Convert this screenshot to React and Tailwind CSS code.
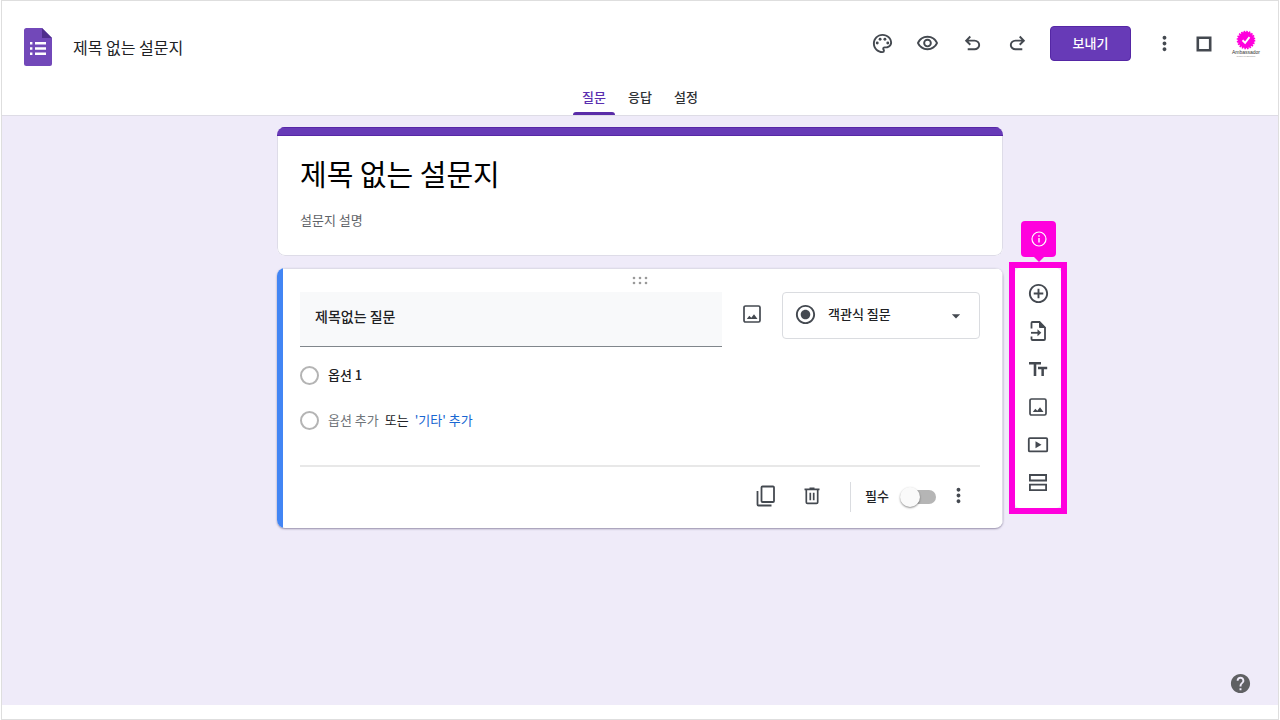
import {
  MdAddCircleOutline,
  MdArrowDropDown,
  MdHelp,
  MdMoreVert,
  MdOutlinePalette,
  MdOutlineVisibility,
  MdRadioButtonChecked,
} from 'react-icons/md';

const UNDO_PATH =
  'M7 19v-2h7.1q1.575 0 2.738-1T18 13.5 16.838 11 14.1 10H7.8l2.6 2.6L9 14 4 9l5-5 1.4 1.4L7.8 8h6.3q2.425 0 4.163 1.575T20 13.5t-1.737 3.925T14.1 19z';

function FormsLogo() {
  return (
    <svg width="28" height="39" viewBox="0 0 28 39" aria-hidden="true">
      <path d="M2.5 0H18l10 10v26a2 2 0 0 1-2 2H2.5A2.5 2.5 0 0 1 0 35.5v-33A2.5 2.5 0 0 1 2.5 0z" fill="#7248b9" />
      <path d="M18 0l10 10H18z" fill="#4f2d8c" />
      <path d="M11 14h11v2.4H11zM11 19.3h11v2.4H11zM11 24.6h11V27H11z" fill="#fff" />
      <path d="M6 14h2.4v2.4H6zM6 19.3h2.4v2.4H6zM6 24.6h2.4V27H6z" fill="#fff" />
    </svg>
  );
}

function UndoIcon({ className = '' }) {
  return (
    <svg width="23" height="23" viewBox="0 0 24 24" fill="currentColor" className={className} aria-hidden="true">
      <path d={UNDO_PATH} />
    </svg>
  );
}

function FrameIcon() {
  return (
    <svg width="16" height="16" viewBox="0 0 16 16" fill="none" stroke="currentColor" strokeWidth="2.6" aria-hidden="true">
      <path d="M1.8 1.8h12.4v12.4H1.8z" />
    </svg>
  );
}

function ImageIcon() {
  return (
    <svg width="20" height="20" viewBox="0 0 20 20" fill="none" aria-hidden="true">
      <rect x="2" y="2" width="16" height="16" rx="1.5" stroke="currentColor" strokeWidth="1.7" />
      <path d="M4.8 15l2.5-3.2 2 2 2.700-3.600 3.500 4.800z" fill="currentColor" />
    </svg>
  );
}

function CopyIcon() {
  return (
    <svg width="22" height="22" viewBox="0 0 22 22" fill="none" stroke="currentColor" strokeWidth="1.8" aria-hidden="true">
      <rect x="6.5" y="1.500" width="12.5" height="15.5" rx="1" />
      <path d="M2.5 6v13.5q0 1 1 1h13" />
    </svg>
  );
}

function TrashIcon() {
  return (
    <svg width="20" height="20" viewBox="0 0 20 20" fill="none" stroke="currentColor" strokeWidth="1.7" aria-hidden="true">
      <path d="M2.5 3.4h15M7.5 2.4h5M4.3 3.6v12.6q0 1.200 1.200 1.200h9q1.200 0 1.200-1.200V3.600M8.300 6.800v7.400M11.700 6.800v7.400" />
    </svg>
  );
}

function ImportIcon() {
  return (
    <svg width="22" height="22" viewBox="0 0 22 22" fill="none" stroke="currentColor" strokeWidth="1.8" aria-hidden="true">
      <path d="M4.5 8.5V3q0-1 1-1h7L18 7.5V19q0 1-1 1H5.5q-1 0-1-1v-2.5" />
      <path d="M12.5 2v5.5H18z" fill="currentColor" strokeWidth="1" />
      <path d="M4 12.8h8" />
      <path d="M10.500 9.300l3.800 3.500-3.800 3.500z" fill="currentColor" stroke="none" />
    </svg>
  );
}

function TextIcon() {
  return (
    <svg width="22" height="20" viewBox="0 0 22 20" fill="currentColor" aria-hidden="true">
      <path d="M2 3h12v2.6H9.3V17H6.7V5.600H2zM11 7.800h9.200v2.500h-3.300V17h-2.500v-6.700H11z" />
    </svg>
  );
}

function VideoIcon() {
  return (
    <svg width="22" height="18" viewBox="0 0 22 18" fill="none" aria-hidden="true">
      <rect x="1.8" y="2.2" width="18.4" height="13.2" rx="1" stroke="currentColor" strokeWidth="1.8" />
      <path d="M8.5 5.300l6 3.500-6 3.500z" fill="currentColor" />
    </svg>
  );
}

function SectionIcon() {
  return (
    <svg width="20" height="20" viewBox="0 0 20 20" fill="none" stroke="currentColor" strokeWidth="1.8" aria-hidden="true">
      <path d="M1.9 2h16.2v5.5H1.9zM1.9 11.7h16.2v5.5H1.9z" />
    </svg>
  );
}

function InfoIcon() {
  return (
    <svg width="16" height="16" viewBox="0 0 16 16" fill="none" stroke="#fff" strokeWidth="1.200" aria-hidden="true">
      <circle cx="8" cy="8" r="7" />
      <path d="M8 7v4.500M8 4.200v1.500" strokeWidth="1.400" />
    </svg>
  );
}

function AvatarBadge() {
  return (
    <svg width="20" height="20" viewBox="0 0 20 20" aria-hidden="true">
      <circle cx="10" cy="10" r="8.3" fill="#ff00dd" />
      <circle cx="10" cy="10" r="8.5" fill="none" stroke="#ff00dd" strokeWidth="1.6" strokeDasharray="1.6 1.07" />
      <path d="M6.5 10.3l2.6 2.5 4.4-5.6" fill="none" stroke="#fff" strokeWidth="1.9" />
    </svg>
  );
}

function IconButton({ label, children }) {
  return (
    <button type="button" aria-label={label} className="flex h-6 w-6 shrink-0 items-center justify-center text-[#444950]">
      {children}
    </button>
  );
}

const tabs = ['질문', '응답', '설정'];

const tools = [
  { label: '질문 추가', icon: <MdAddCircleOutline size={23} /> },
  { label: '질문 가져오기', icon: <ImportIcon /> },
  { label: '제목 및 설명 추가', icon: <TextIcon /> },
  { label: '이미지 추가', icon: <ImageIcon /> },
  { label: '동영상 추가', icon: <VideoIcon /> },
  { label: '섹션 추가', icon: <SectionIcon /> },
];

function Header() {
  return (
    <header className="border-b border-[#dedce6] bg-white">
      <div className="flex h-20 items-start justify-between pt-[25px] pr-[18px] pl-[22px]">
        <div className="flex h-[43px] items-center gap-[21px]">
          <FormsLogo />
          <h1 className="pb-[2px] text-base text-[#202124]">제목 없는 설문지</h1>
        </div>

        <div className="flex h-[35px] items-center gap-[21px]">
          <IconButton label="테마 맞춤설정"><MdOutlinePalette size={23} /></IconButton>
          <IconButton label="미리보기"><MdOutlineVisibility size={23} /></IconButton>
          <IconButton label="실행취소"><UndoIcon /></IconButton>
          <IconButton label="다시 실행"><UndoIcon className="-scale-x-100" /></IconButton>
          <button type="button" className="h-[35px] w-[81px] rounded-[4px] border border-[#5527a5] bg-[#673ab7] pb-[2px] text-[13px] font-medium text-white">
            보내기
          </button>
          <div className="flex items-center gap-4">
            <IconButton label="더보기"><MdMoreVert size={23} /></IconButton>
            <IconButton label="앱"><FrameIcon /></IconButton>
            <button type="button" className="flex w-7 flex-col items-center whitespace-nowrap">
              <AvatarBadge />
              <span className="font-['Liberation_Sans',sans-serif] text-[5px] leading-[5px] text-[#333]">Ambassador</span>
              <span className="font-['Liberation_Sans',sans-serif] text-[2px] leading-[3px] text-[#888]">Google for Education</span>
            </button>
          </div>
        </div>
      </div>

      <nav className="flex justify-center gap-1">
        {tabs.map((tab, i) => (
          <a
            key={tab}
            href="#"
            className={`relative flex h-[34px] w-[42px] items-center justify-center pb-[2px] text-[13px] font-medium ${i === 0 ? 'text-[#5b2fb0]' : 'text-[#2d3034]'}`}
          >
            {tab}
            {i === 0 && <span className="absolute inset-x-0 bottom-0 h-[3px] rounded-t-[3px] bg-[#5a2ca8]" />}
          </a>
        ))}
      </nav>
    </header>
  );
}

function TitleCard() {
  return (
    <section className="overflow-hidden rounded-lg bg-white">
      <div className="h-[9px] border-y border-[#5727a6] bg-[#673ab7]" />
      <div className="rounded-b-lg border-x border-b border-[#dedce8] px-[22px] pt-[18px] pb-[26px]">
        <input aria-label="설문지 제목" defaultValue="제목 없는 설문지" className="block h-10 w-full text-[29px] text-black outline-none" />
        <input aria-label="설문지 설명" placeholder="설문지 설명" className="mt-[15px] block h-5 w-full text-[13px] outline-none placeholder:text-[#5f6368]" />
      </div>
    </section>
  );
}

function DragDots() {
  return (
    <svg width="16" height="9" viewBox="0 0 16 9" fill="#9a9a9a" aria-hidden="true">
      <circle cx="2" cy="2" r="1.3" />
      <circle cx="8" cy="2" r="1.3" />
      <circle cx="14" cy="2" r="1.3" />
      <circle cx="2" cy="7" r="1.3" />
      <circle cx="8" cy="7" r="1.3" />
      <circle cx="14" cy="7" r="1.3" />
    </svg>
  );
}

const radioClass = 'h-[19px] w-[19px] appearance-none rounded-full border-2 border-[#b4b4b4] bg-white';

function QuestionCard() {
  return (
    <section className="flex overflow-hidden rounded-lg bg-white shadow-[0_1px_2px_rgba(60,50,90,0.5)]">
      <div className="w-[6px] shrink-0 bg-[#4285f4]" />
      <div className="min-w-0 flex-1 border-t border-r border-[#dedce8] pr-[22px] pl-[17px]">
        <div className="flex h-[23px] items-center justify-center">
          <DragDots />
        </div>

        <div className="flex items-start gap-[18px]">
          <input
            aria-label="질문"
            defaultValue="제목없는 질문"
            className="h-[55px] min-w-0 flex-1 border-b border-[#80868b] bg-[#f8f9fa] px-[15px] pb-[6px] text-[14px] font-medium text-[#202124] outline-none"
          />
          <div className="flex h-11 items-center">
            <IconButton label="이미지 추가"><ImageIcon /></IconButton>
          </div>
          <div className="relative flex h-[47px] w-[198px] items-center text-[#444950]">
            <select aria-label="질문 유형" className="h-full w-full appearance-none rounded-[4px] border border-[#dadce0] bg-white pb-[3px] pl-[45px] text-[13px] font-medium text-[#202124] outline-none">
              <option>객관식 질문</option>
            </select>
            <MdRadioButtonChecked size={23} className="pointer-events-none absolute top-[11px] left-3" />
            <MdArrowDropDown size={20} className="pointer-events-none absolute right-[14px]" />
          </div>
        </div>

        <div className="mt-[6px] text-[13px] text-[#202124]">
          <div className="flex h-[45px] items-center gap-[9px]">
            <input type="radio" name="option" id="option-1" className={radioClass} />
            <label htmlFor="option-1" className="pb-[2px] font-medium">옵션 1</label>
          </div>
          <div className="flex h-[45px] items-center gap-[9px]">
            <input type="radio" name="option" id="option-new" className={radioClass} />
            <div className="flex gap-[6px] pb-[2px]">
              <label htmlFor="option-new" className="text-[#70757a]">옵션 추가</label>
              <span>또는</span>
              <button type="button" className="text-[#1967d2]">'기타' 추가</button>
            </div>
          </div>
        </div>

        <div className="mt-[22px] flex h-[63px] items-center justify-end border-t-2 border-[#e8e8e8] pr-[10px] pb-px">
          <div className="flex items-center gap-[22px] pb-[3px]">
            <IconButton label="복사"><CopyIcon /></IconButton>
            <IconButton label="삭제"><TrashIcon /></IconButton>
          </div>
          <div className="ml-[26px] flex h-[30px] items-center border-l border-[#dadce0] pl-[14px]">
            <label htmlFor="required" className="pb-[2px] text-[13px] font-medium text-[#202124]">필수</label>
            <input
              id="required"
              type="checkbox"
              role="switch"
              className="relative mr-[10px] ml-[13px] h-[14px] w-[34px] appearance-none rounded-full bg-[#b5b5b5] before:absolute before:-top-[3px] before:-left-[2px] before:h-5 before:w-5 before:rounded-full before:bg-[#fafafa] before:shadow-[0_1px_2px_rgba(0,0,0,0.45)]"
            />
            <div className="pb-[3px]">
              <IconButton label="더보기"><MdMoreVert size={23} /></IconButton>
            </div>
          </div>
        </div>
      </div>
    </section>
  );
}

function Toolbar() {
  return (
    <aside className="relative mt-[135px] ml-[6px] w-[58px] self-start border-6 border-[#ff00dd] bg-[#efebf9]">
      {/* callout */}
      <div className="absolute -top-[47px] left-[6px] flex h-9 w-[35px] items-center justify-center rounded-[4px] bg-[#ff00dd]">
        <InfoIcon />
        <span className="absolute -bottom-[5px] h-0 w-0 border-x-[6px] border-t-[6px] border-x-transparent border-t-[#ff00dd]" />
      </div>
      <div className="rounded-[5px] bg-white py-[6px]">
        {tools.map((tool) => (
          <div key={tool.label} className="flex h-[38px] items-center justify-center">
            <IconButton label={tool.label}>{tool.icon}</IconButton>
          </div>
        ))}
      </div>
    </aside>
  );
}

export default function App() {
  return (
    <div className="min-h-screen bg-white px-px font-['Noto_Sans_CJK_KR','Noto_Sans',sans-serif]">
      <div className="flex min-h-screen flex-col border border-[#dedede] pb-[14px]">
        <Header />
        <main className="relative grid flex-1 grid-cols-[1fr_minmax(0,726px)_1fr] bg-[#efebf9] pt-[11px] pb-12">
          <div className="col-start-2 flex flex-col gap-3">
            <TitleCard />
            <QuestionCard />
          </div>
          <Toolbar />
          <button type="button" aria-label="도움말" className="absolute right-[26px] bottom-[10px] text-[#5f6063]">
            <MdHelp size={23} />
          </button>
        </main>
      </div>
    </div>
  );
}
